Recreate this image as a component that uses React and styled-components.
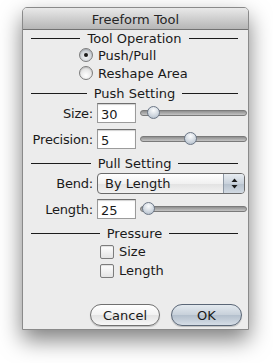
import styled, { createGlobalStyle } from 'styled-components';

const GlobalStyle = createGlobalStyle`
  html, body {
    margin: 0;
    padding: 0;
    background: #fff;
  }
  body {
    font-family: "DejaVu Sans", "Lucida Grande", sans-serif;
    font-size: 13px;
    color: #1a1a1a;
  }
`;

const Page = styled.div`
  width: 273px;
  height: 363px;
  padding: 7px 0 0 22px;
  box-sizing: border-box;
  overflow: hidden;
`;

const Window = styled.div`
  width: 227px;
  height: 323px;
  box-sizing: border-box;
  border: 1px solid #8a8a8a;
  border-radius: 5px 5px 0 0;
  background: #ececec;
  box-shadow: 0 10px 22px rgba(0, 0, 0, 0.5);
  display: flex;
  flex-direction: column;
  overflow: hidden;
`;

const TitleBar = styled.div`
  height: 20px;
  flex: none;
  display: flex;
  align-items: center;
  justify-content: center;
  background: linear-gradient(#e9e9e9, #cfcfcf 50%, #b6b6b6);
  border-bottom: 1px solid #727272;
  color: #262626;
  font-size: 13px;
  padding-top: 1px;
`;

const Body = styled.div`
  flex: 1;
  display: flex;
  flex-direction: column;
  padding-top: 1px;
`;

const SectionHeader = styled.div`
  height: 15px;
  display: flex;
  align-items: center;
  gap: 7px;
  padding: 0 10px 0 8px;
  margin-top: ${p => p.$top || 0}px;

  &::before, &::after {
    content: '';
    flex: 1;
    height: 1px;
    background: #1c1c1c;
  }
`;

const OptionList = styled.div`
  display: flex;
  flex-direction: column;
  padding-left: ${p => p.$indent}px;
  margin-top: ${p => p.$top || 0}px;
`;

const Option = styled.label`
  height: ${p => p.$h}px;
  display: flex;
  align-items: center;
  gap: 5px;
`;

const Radio = styled.span`
  width: 12px;
  height: 12px;
  border-radius: 50%;
  border: 1px solid #7c7c7c;
  flex: none;
  display: flex;
  align-items: center;
  justify-content: center;
  background: ${p => p.$on
    ? 'radial-gradient(circle at 50% 65%, #f4f6f8, #c3c9d0 70%)'
    : 'radial-gradient(circle at 50% 70%, #ffffff, #dcdcdc 80%)'};
  box-shadow: inset 0 1px 1px rgba(0, 0, 0, 0.15);

  &::after {
    content: '';
    display: ${p => p.$on ? 'block' : 'none'};
    width: 4px;
    height: 4px;
    border-radius: 50%;
    background: #1b1b1b;
  }
`;

const Checkbox = styled.span`
  width: 12px;
  height: 12px;
  border-radius: 2px;
  border: 1px solid #7c7c7c;
  flex: none;
  background: linear-gradient(#ffffff, #e4e4e4);
  box-shadow: inset 0 1px 1px rgba(0, 0, 0, 0.12);
`;

const FormRow = styled.div`
  display: grid;
  grid-template-columns: 70px 39px 1fr;
  column-gap: 4px;
  align-items: center;
  height: ${p => p.$h || 20}px;
  margin-top: ${p => p.$top || 0}px;
  padding-right: 1px;
`;

const Label = styled.span`
  text-align: right;
  letter-spacing: -0.2px;
`;

const Field = styled.div`
  height: 20px;
  box-sizing: border-box;
  border: 1px solid #9b9b9b;
  border-top-color: #6f6f6f;
  background: #fff;
  box-shadow: inset 0 1px 1px rgba(0, 0, 0, 0.18);
  padding: 3px 0 0 3px;
  line-height: 15px;
`;

const Track = styled.div`
  position: relative;
  height: 4px;
  border: 1px solid #7a7a7a;
  border-radius: 3px;
  background: linear-gradient(#8e8e8e, #c4c4c4);
`;

const Thumb = styled.span`
  position: absolute;
  top: -5px;
  left: ${p => p.$pos}px;
  width: 11px;
  height: 11px;
  border-radius: 50%;
  border: 1px solid #6c7786;
  background: radial-gradient(circle at 50% 30%, #fbfcfd, #cdd5de 60%, #a7b3c1);
`;

const Popup = styled.div`
  grid-column: 2 / 4;
  margin-right: 2px;
  height: 21px;
  box-sizing: border-box;
  border: 1px solid #6a6a6a;
  border-radius: 4px;
  background: linear-gradient(#ffffff, #f1f1f1 50%, #e2e2e2 51%, #f2f2f2);
  display: flex;
  align-items: center;
  overflow: hidden;
`;

const PopupText = styled.span`
  flex: 1;
  padding-left: 7px;
`;

const PopupArrows = styled.span`
  width: 20px;
  align-self: stretch;
  border-left: 1px solid #8e98a4;
  background: linear-gradient(#e8edf2, #c9d2dc 50%, #b5c0cc 51%, #d2dae3);
  display: flex;
  align-items: center;
  justify-content: center;
`;

const ButtonRow = styled.div`
  margin-top: auto;
  display: flex;
  justify-content: flex-end;
  gap: 11px;
  padding: 0 6px 3px 0;
`;

const Button = styled.button`
  width: ${p => p.$w}px;
  height: 22px;
  border-radius: 11px;
  font: inherit;
  font-size: 13px;
  color: #1a1a1a;
  padding: 0;
  border: 1px solid ${p => p.$primary ? '#5a6676' : '#707070'};
  background: ${p => p.$primary
    ? 'linear-gradient(#e3e9ef, #c7d0da 50%, #b3bfcc 51%, #d5dde6)'
    : 'linear-gradient(#ffffff, #f2f2f2 50%, #e3e3e3 51%, #f7f7f7)'};
  box-shadow: 0 1px 1px rgba(0, 0, 0, 0.2);
`;

const Slider = ({ pos }) => (
  <Track>
    <Thumb $pos={pos} />
  </Track>
);

const Arrows = () => (
  <svg width="7" height="11" viewBox="0 0 7 11">
    <path d="M3.5 0.5 L6.5 4 L0.5 4 Z" fill="#1a1a1a" />
    <path d="M3.5 10.5 L6.5 7 L0.5 7 Z" fill="#1a1a1a" />
  </svg>
);

const App = () => (
  <Page>
    <GlobalStyle />
    <Window>
      <TitleBar>Freeform Tool</TitleBar>
      <Body>
        <SectionHeader>Tool Operation</SectionHeader>
        <OptionList $indent={56}>
          <Option $h={18}><Radio $on />Push/Pull</Option>
          <Option $h={18}><Radio />Reshape Area</Option>
        </OptionList>

        <SectionHeader $top={4}>Push Setting</SectionHeader>
        <FormRow $top={2}>
          <Label>Size:</Label>
          <Field>30</Field>
          <Slider pos={6} />
        </FormRow>
        <FormRow $top={6}>
          <Label>Precision:</Label>
          <Field>5</Field>
          <Slider pos={43} />
        </FormRow>

        <SectionHeader $top={7}>Pull Setting</SectionHeader>
        <FormRow $top={2} $h={21}>
          <Label>Bend:</Label>
          <Popup>
            <PopupText>By Length</PopupText>
            <PopupArrows><Arrows /></PopupArrows>
          </Popup>
        </FormRow>
        <FormRow $top={5}>
          <Label>Length:</Label>
          <Field>25</Field>
          <Slider pos={1} />
        </FormRow>

        <SectionHeader $top={7}>Pressure</SectionHeader>
        <OptionList $indent={77} $top={1}>
          <Option $h={19}><Checkbox />Size</Option>
          <Option $h={19}><Checkbox />Length</Option>
        </OptionList>

        <ButtonRow>
          <Button $w={70}>Cancel</Button>
          <Button $w={71} $primary>OK</Button>
        </ButtonRow>
      </Body>
    </Window>
  </Page>
);

export default App;
